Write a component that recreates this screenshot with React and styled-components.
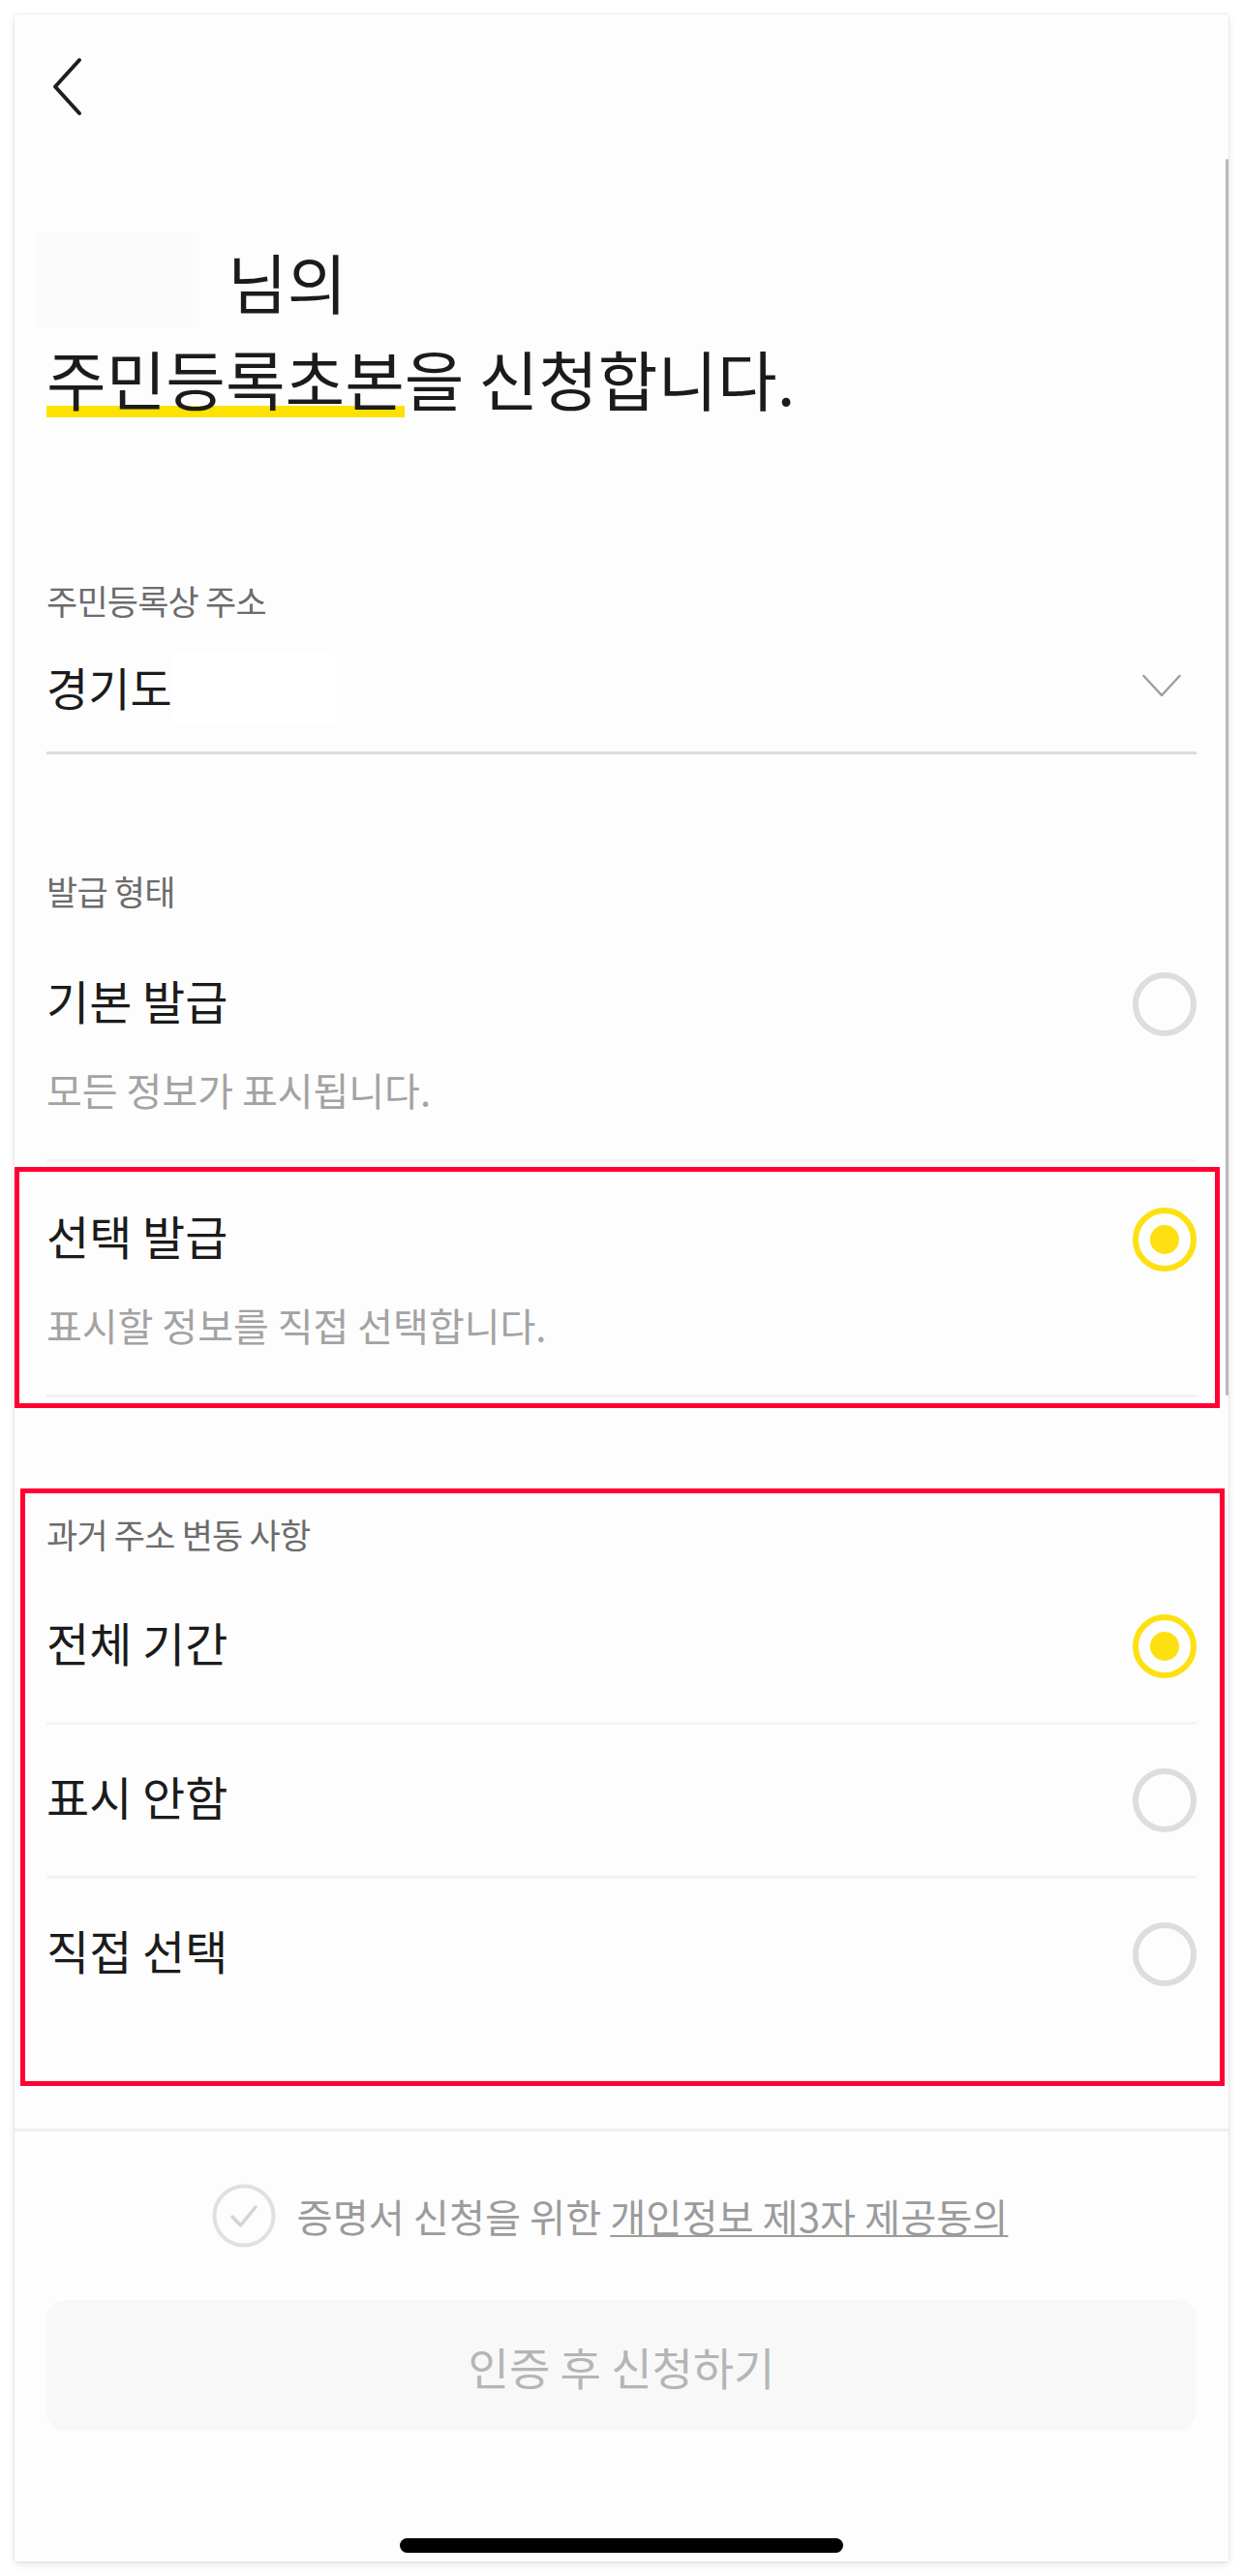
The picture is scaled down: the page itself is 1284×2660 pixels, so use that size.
import React from "react";
import styled, { createGlobalStyle } from "styled-components";

const GlobalStyle = createGlobalStyle`
  html, body {
    margin: 0;
    padding: 0;
    background: #ffffff;
  }
  body {
    font-family: "Noto Sans CJK KR", "Noto Sans", sans-serif;
    -webkit-font-smoothing: antialiased;
  }
  * { box-sizing: border-box; }
`;

const Page = styled.div`
  width: 1284px;
  padding: 15px;
`;

const Phone = styled.div`
  position: relative;
  width: 1254px;
  height: 2630px;
  background: #fdfdfd;
  box-shadow: 0 0 2px rgba(0, 0, 0, 0.14), 0 3px 8px rgba(0, 0, 0, 0.1);
  display: flex;
  flex-direction: column;
`;

const ScrollIndicator = styled.div`
  position: absolute;
  top: 149px;
  right: 0;
  width: 3px;
  height: 1277px;
  border-radius: 2px;
  background: #b9b9b9;
`;

const NavBar = styled.div`
  height: 148px;
  display: flex;
  align-items: center;
  padding-left: 35px;
`;

const BackButton = styled.button`
  border: none;
  background: none;
  padding: 0;
  width: 40px;
  height: 70px;
  display: flex;
`;

const Content = styled.div`
  padding: 0 33px;
  display: flex;
  flex-direction: column;
`;

const Headline = styled.h1`
  margin: 77px 0 0;
  font-weight: 400;
  font-size: 67px;
  line-height: 100px;
  letter-spacing: 0;
  color: #1b1b1b;
`;

const HeadLine = styled.div`
  display: block;
  white-space: nowrap;
`;

const NameMask = styled.span`
  display: inline-block;
  vertical-align: top;
  width: 168px;
  height: 98px;
  margin: 0 30px 0 -11px;
  background: #fbfbfb;
`;

const Highlight = styled.span`
  background-image: linear-gradient(#fde100, #fde100);
  background-repeat: no-repeat;
  background-size: 100% 12px;
  background-position: 0 calc(100% - 7px);
`;

const Section = styled.section`
  position: relative;
  margin-top: ${(p) => p.$top}px;
  display: flex;
  flex-direction: column;

  ${(p) =>
    p.$marked &&
    `
    &::after {
      content: "";
      position: absolute;
      top: -22px;
      bottom: -58px;
      left: -27px;
      right: -29px;
      border: 5px solid #ff0033;
      pointer-events: none;
    }
  `}
`;

const Label = styled.div`
  font-size: 35px;
  line-height: 50px;
  letter-spacing: -0.8px;
  color: #6c6c6c;
  margin-bottom: ${(p) => p.$after || 0}px;
`;

const SelectField = styled.div`
  padding: 18px 0 23px;
  border-bottom: 3px solid #dcdcdc;
`;

const SelectRow = styled.div`
  height: 90px;
  display: flex;
  align-items: center;
  justify-content: space-between;
`;

const SelectValue = styled.div`
  display: flex;
  align-items: center;
  font-size: 47px;
  color: #1b1b1b;
`;

const AddressMask = styled.span`
  display: inline-block;
  width: 166px;
  height: 75px;
  margin-left: 2px;
  background: #ffffff;
`;

const DropIcon = styled.svg`
  width: 40px;
  height: 24px;
  margin-right: 16px;
`;

const OptionItem = styled.div`
  position: relative;
  padding: ${(p) => p.$pad}px 0;
  border-bottom: ${(p) => (p.$divider ? "3px solid #f3f3f3" : "none")};

  ${(p) =>
    p.$marked &&
    `
    &::after {
      content: "";
      position: absolute;
      top: 5px;
      bottom: -14px;
      left: -33px;
      right: -24px;
      border: 5px solid #ff0033;
      pointer-events: none;
    }
  `}
`;

const OptionRow = styled.div`
  height: 66px;
  display: flex;
  align-items: flex-start;
  justify-content: space-between;
`;

const OptionTitle = styled.div`
  font-size: 48px;
  line-height: 56px;
  color: #1b1b1b;
`;

const OptionDesc = styled.div`
  margin-top: 30px;
  font-size: 40px;
  line-height: 50px;
  color: #a3a3a3;
`;

const Radio = styled.span`
  flex: none;
  width: 66px;
  height: 66px;
  border-radius: 50%;
  border: 6px solid ${(p) => (p.$checked ? "#fde011" : "#dddddd")};
  display: flex;
  align-items: center;
  justify-content: center;

  &::before {
    content: "";
    display: ${(p) => (p.$checked ? "block" : "none")};
    width: 30px;
    height: 30px;
    border-radius: 50%;
    background: #fde011;
  }
`;

const Footer = styled.footer`
  margin-top: auto;
  border-top: 3px solid #f0f0f0;
  padding: 54px 33px 0;
  display: flex;
  flex-direction: column;
`;

const ConsentRow = styled.div`
  height: 66px;
  display: flex;
  align-items: center;
  justify-content: center;
  gap: 22px;
  padding-right: 24px;
`;

const CheckIcon = styled.svg`
  width: 66px;
  height: 66px;
  flex: none;
`;

const ConsentText = styled.span`
  font-size: 40.3px;
  line-height: 66px;
  color: #9b9b9b;
  white-space: nowrap;
`;

const ConsentLink = styled.span`
  text-decoration: underline;
  text-decoration-thickness: 2px;
  text-underline-offset: 3px;
`;

const SubmitButton = styled.button`
  margin-top: 54px;
  height: 135px;
  width: 100%;
  border: none;
  border-radius: 20px;
  background: #f8f8f8;
  color: #b5b5b5;
  font-family: inherit;
  font-size: 46px;
`;

const HomeArea = styled.div`
  height: 135px;
  padding-top: 111px;
  display: flex;
  justify-content: center;
`;

const HomeIndicator = styled.div`
  width: 458px;
  height: 15px;
  border-radius: 8px;
  background: #000000;
`;

const Option = ({ title, desc, checked, pad, divider, marked }) => (
  <OptionItem $pad={pad} $divider={divider} $marked={marked}>
    <OptionRow>
      <OptionTitle>{title}</OptionTitle>
      <Radio $checked={checked} />
    </OptionRow>
    {desc && <OptionDesc>{desc}</OptionDesc>}
  </OptionItem>
);

export default function App() {
  return (
    <>
      <GlobalStyle />
      <Page>
        <Phone>
          <ScrollIndicator />
          <NavBar>
            <BackButton aria-label="뒤로">
              <svg width="40" height="70" viewBox="0 0 40 70">
                <path
                  d="M32 8 L7 35.5 L32 63"
                  fill="none"
                  stroke="#1e1e1e"
                  strokeWidth="4"
                  strokeLinecap="round"
                  strokeLinejoin="round"
                />
              </svg>
            </BackButton>
          </NavBar>

          <Content>
            <Headline>
              <HeadLine>
                <NameMask />
                님의
              </HeadLine>
              <HeadLine>
                <Highlight>주민등록초본</Highlight>을 신청합니다.
              </HeadLine>
            </Headline>

            <Section $top={155}>
              <Label>주민등록상 주소</Label>
              <SelectField>
                <SelectRow>
                  <SelectValue>
                    경기도
                    <AddressMask />
                  </SelectValue>
                  <DropIcon viewBox="0 0 40 24">
                    <path
                      d="M1.5 2 L20 22 L38.5 2"
                      fill="none"
                      stroke="#9e9e9e"
                      strokeWidth="2.5"
                      strokeLinecap="round"
                      strokeLinejoin="round"
                    />
                  </DropIcon>
                </SelectRow>
              </SelectField>
            </Section>

            <Section $top={116}>
              <Label $after={12}>발급 형태</Label>
              <Option
                title="기본 발급"
                desc="모든 정보가 표시됩니다."
                pad={47}
                divider
              />
              <Option
                title="선택 발급"
                desc="표시할 정보를 직접 선택합니다."
                pad={47}
                divider
                checked
                marked
              />
            </Section>

            <Section $top={116} $marked>
              <Label $after={12}>과거 주소 변동 사항</Label>
              <Option title="전체 기간" pad={45.5} divider checked />
              <Option title="표시 안함" pad={45} divider />
              <Option title="직접 선택" pad={45} />
            </Section>
          </Content>

          <Footer>
            <ConsentRow>
              <CheckIcon viewBox="0 0 66 66">
                <circle cx="33" cy="33" r="30.5" fill="none" stroke="#e0e0e0" strokeWidth="4" />
                <path
                  d="M21 34 L29.5 43 L45 24"
                  fill="none"
                  stroke="#d4d4d4"
                  strokeWidth="3.5"
                  strokeLinecap="round"
                  strokeLinejoin="round"
                />
              </CheckIcon>
              <ConsentText>
                증명서 신청을 위한 <ConsentLink>개인정보 제3자 제공동의</ConsentLink>
              </ConsentText>
            </ConsentRow>
            <SubmitButton>인증 후 신청하기</SubmitButton>
            <HomeArea>
              <HomeIndicator />
            </HomeArea>
          </Footer>
        </Phone>
      </Page>
    </>
  );
}
